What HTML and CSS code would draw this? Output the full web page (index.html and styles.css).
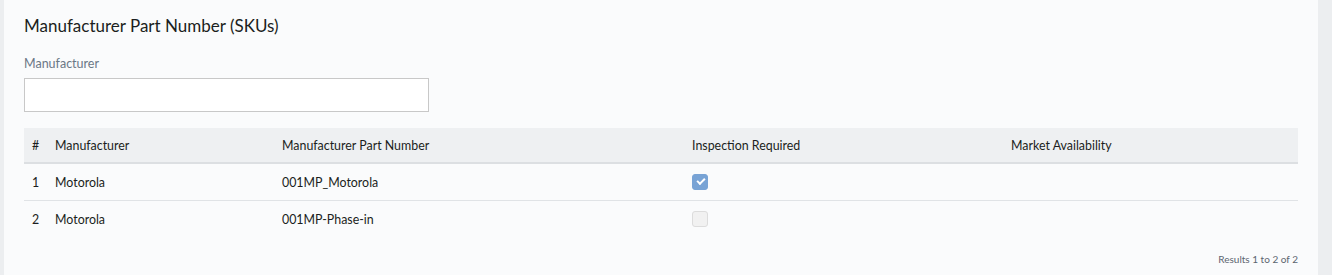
FILE: index.html
```html
<!DOCTYPE html>
<html lang="en">
<head>
    <meta charset="UTF-8">
    <title>Manufacturer Part Number (SKUs)</title>
    <link rel="stylesheet" href="styles.css">
</head>
<body>
<div class="page">
    <div class="card">
        <h2 class="card-title">Manufacturer Part Number (SKUs)</h2>
        <div class="field">
            <label class="field-label" for="manufacturer">Manufacturer</label>
            <input class="field-input" id="manufacturer" type="text">
        </div>
        <table class="sku-table">
            <colgroup>
                <col class="col-num">
                <col class="col-man">
                <col class="col-mpn">
                <col class="col-insp">
                <col>
            </colgroup>
            <thead>
                <tr>
                    <th>#</th>
                    <th>Manufacturer</th>
                    <th>Manufacturer Part Number</th>
                    <th>Inspection Required</th>
                    <th>Market Availability</th>
                </tr>
            </thead>
            <tbody>
                <tr>
                    <td>1</td>
                    <td>Motorola</td>
                    <td>001MP_Motorola</td>
                    <td><span class="check checked"></span></td>
                    <td></td>
                </tr>
                <tr>
                    <td>2</td>
                    <td>Motorola</td>
                    <td>001MP-Phase-in</td>
                    <td><span class="check"></span></td>
                    <td></td>
                </tr>
            </tbody>
        </table>
        <div class="results">Results 1 to 2 of 2</div>
    </div>
</div>
</body>
</html>
```

FILE: styles.css
```css
body {
    margin: 0;
    background: #eceef0;
    font-family: Lato, "Open Sans", sans-serif;
    color: #1b1e21;
}
.page {
    padding: 0 14px 0 4px;
}
.card {
    background: #fafbfc;
    height: 275px;
    padding: 14px 20px 0 20px;
    box-sizing: border-box;
}
.card-title {
    margin: 0;
    font-size: 17px;
    font-weight: 400;
    line-height: 24px;
}
.field {
    margin-top: 18px;
}
.field-label {
    display: block;
    font-size: 12.5px;
    color: #6b7786;
    line-height: 16px;
    margin-bottom: 6px;
}
.field-input {
    display: block;
    width: 405px;
    height: 34px;
    box-sizing: border-box;
    border: 1px solid #c8c8c8;
    background: #fff;
    margin: 0;
}
.sku-table {
    margin-top: 16px;
    width: 100%;
    border-collapse: collapse;
    table-layout: fixed;
    font-size: 12.4px;
}
.col-num { width: 23px; }
.col-man { width: 227px; }
.col-mpn { width: 410px; }
.col-insp { width: 319px; }
.sku-table th {
    text-align: left;
    font-weight: 400;
    background: #eef0f2;
    height: 34px;
    padding: 0 8px;
    border-bottom: 2px solid #dcdfe2;
}
.sku-table td {
    height: 36px;
    padding: 0 8px;
    border-bottom: 1px solid #e0e3e6;
}
.sku-table tbody tr:last-child td {
    border-bottom: none;
}
.check {
    display: block;
    width: 16px;
    height: 16px;
    box-sizing: border-box;
    border-radius: 3px;
    border: 1px solid #dcdcdc;
    background: #f1f1f1;
    position: relative;
}
.check.checked {
    background: #78a3d5;
    border-color: #78a3d5;
}
.check.checked::after {
    content: "";
    position: absolute;
    left: 4px;
    top: 3px;
    width: 6px;
    height: 3px;
    border-left: 2px solid #fff;
    border-bottom: 2px solid #fff;
    transform: rotate(-45deg);
}
.results {
    text-align: right;
    font-size: 10px;
    color: #5c6570;
    margin-top: 16px;
}
```
